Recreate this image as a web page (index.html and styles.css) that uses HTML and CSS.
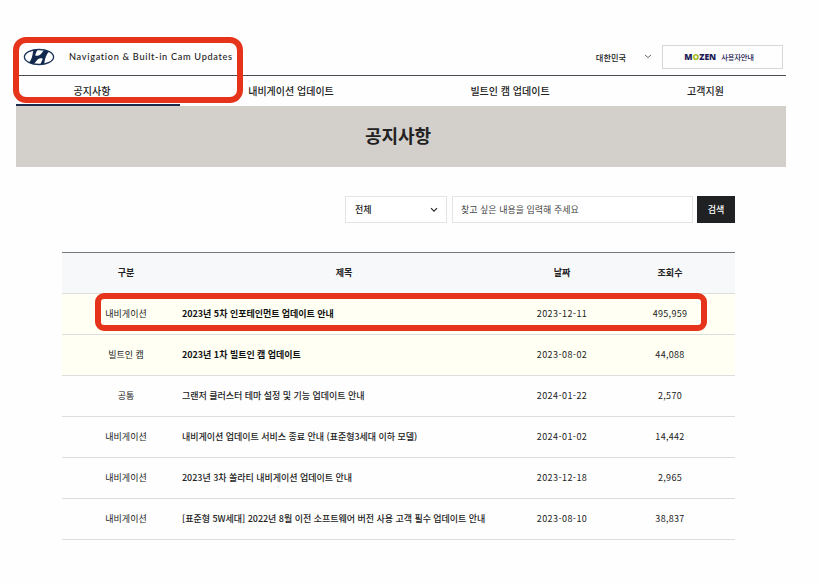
FILE: index.html
```html
<!DOCTYPE html>
<html lang="ko">
<head>
  <meta charset="UTF-8" />
  <meta name="viewport" content="width=device-width, initial-scale=1.0"/>
  <title>공지사항</title>
  <link rel="stylesheet" href="styles.css">
</head>

<body>
  <div class="page">

    <!-- HEADER -->
    <header class="header">
      <svg class="logo" viewBox="0 0 32 18" width="32" height="18">
        <ellipse cx="16" cy="9" rx="14.6" ry="7.5" fill="#fff" stroke="#1c3358" stroke-width="1.3"/>
        <path fill="#12284c" d="M10.2 2.2 L14.4 1.4 C13.6 3.8 12.2 6.2 12.3 7.2 C12.5 8.3 15.8 8 17.4 6.6 C19.2 4.8 20.2 2.6 21.6 2 L26 3.6 C23.6 6 21.8 10.5 21.2 15.9 L17.4 16.6 C18.2 14.2 19.7 11.6 19.6 10.8 C19.4 9.7 16.2 10 14.6 11.4 C12.8 13.2 11.8 15.4 10.4 16 L6 14.4 C8.6 12 9.6 7.5 10.2 2.2 Z"/>
      </svg>
      <span class="site-name">Navigation &amp; Built-in Cam Updates</span>
      <div class="country">
        <span>대한민국</span>
        <svg viewBox="0 0 8 5" width="8" height="5"><path d="M1 1 L4 3.6 L7 1" fill="none" stroke="#555" stroke-width="0.9"/></svg>
      </div>
      <a class="guide"><b>M<i>O</i>ZEN</b><span>사용자안내</span></a>
    </header>

    <!-- MENU -->
    <nav class="menu">
      <a class="active"><span>공지사항</span></a>
      <a><span>내비게이션 업데이트</span></a>
      <a><span>빌트인 캠 업데이트</span></a>
      <a><span>고객지원</span></a>
    </nav>

    <h1 class="title">공지사항</h1>

    <main class="content">
      <!-- SEARCH -->
      <div class="search">
        <div class="select">
          <span>전체</span>
          <svg viewBox="0 0 8 6" width="8" height="6"><path d="M1 1.2 L4 4.2 L7 1.2" fill="none" stroke="#222" stroke-width="1.1"/></svg>
        </div>
        <div class="keyword"><span>찾고 싶은 내용을 입력해 주세요</span></div>
        <div class="submit">검색</div>
      </div>

      <!-- NOTICE LIST -->
      <table class="list">
        <colgroup><col class="c1"><col class="c2"><col class="c3"><col class="c4"></colgroup>
        <thead>
          <tr><th>구분</th><th>제목</th><th>날짜</th><th>조회수</th></tr>
        </thead>
        <tbody>
          <tr class="pinned"><td>내비게이션</td><td>2023년 5차 인포테인먼트 업데이트 안내</td><td>2023-12-11</td><td>495,959</td></tr>
          <tr class="pinned"><td>빌트인 캠</td><td>2023년 1차 빌트인 캠 업데이트</td><td>2023-08-02</td><td>44,088</td></tr>
          <tr><td>공통</td><td>그랜저 클러스터 테마 설정 및 기능 업데이트 안내</td><td>2024-01-22</td><td>2,570</td></tr>
          <tr><td>내비게이션</td><td>내비게이션 업데이트 서비스 종료 안내 (표준형3세대 이하 모델)</td><td>2024-01-02</td><td>14,442</td></tr>
          <tr><td>내비게이션</td><td>2023년 3차 쏠라티 내비게이션 업데이트 안내</td><td>2023-12-18</td><td>2,965</td></tr>
          <tr><td>내비게이션</td><td>[표준형 5W세대] 2022년 8월 이전 소프트웨어 버전 사용 고객 필수 업데이트 안내</td><td>2023-08-10</td><td>38,837</td></tr>
        </tbody>
      </table>
    </main>
  </div>

  <!-- RED MARKERS -->
  <div class="marker marker-top"></div>
  <div class="marker marker-row"></div>
</body>
</html>
```
FILE: styles.css
```css
* {
  box-sizing: border-box;
}

body {
  margin: 0;
  height: 583px;
  background: #fefefe;
  color: #222;
  font-family: "Noto Sans CJK KR", sans-serif;
  font-size: 9px;
  overflow: hidden;
}

.page {
  width: 770px;
  margin-left: 16px;
  padding-top: 38px;
}

/* HEADER */
.header {
  display: flex;
  align-items: center;
  height: 38px;
  padding: 0 3px 0 7px;
  border-bottom: 1px solid #4a4a52;
}

.logo {
  display: block;
}

.site-name {
  margin-left: 14px;
  font-family: Lato, sans-serif;
  font-size: 9.2px;
  font-weight: 500;
  letter-spacing: 0.69px;
  white-space: nowrap;
}

.country {
  display: flex;
  align-items: center;
  gap: 18px;
  margin-left: auto;
  margin-right: 10px;
  font-size: 8.2px;
  font-weight: 500;
}

.guide {
  display: flex;
  align-items: center;
  justify-content: center;
  gap: 5px;
  width: 121px;
  height: 24px;
  padding-right: 7px;
  border: 1px solid #d5d7da;
  color: #1d1b54;
  font-size: 7.3px;
  font-weight: 500;
  letter-spacing: -0.2px;
}

.guide b {
  font-family: "Open Sans", sans-serif;
  font-size: 8.5px;
  font-weight: 800;
  letter-spacing: 0;
}

.guide i {
  color: #a9bd1c;
  font-style: normal;
}

/* MENU */
.menu {
  display: grid;
  grid-template-columns: 164px 222px 216px 1fr;
  height: 30px;
  font-size: 10px;
  font-weight: 500;
}

.menu a {
  display: flex;
  align-items: center;
  justify-content: center;
  padding-bottom: 1px;
}

.menu a:last-child {
  padding-left: 7px;
}

.menu .active {
  padding: 1px 12px 0 0;
  border-bottom: 2px solid #1a2b4c;
}

.title {
  display: flex;
  align-items: center;
  justify-content: center;
  height: 61px;
  margin: 0;
  padding: 0 6px 3px 0;
  background: #d3d0cc;
  color: #222;
  font-size: 18px;
  font-weight: 700;
}

.content {
  padding: 29px 51px 0 46px;
}

/* SEARCH */
.search {
  display: flex;
  justify-content: flex-end;
  height: 27px;
}

.select,
.keyword {
  display: flex;
  align-items: center;
  border: 1px solid #e4e4e6;
  background: #fff;
}

.select {
  justify-content: space-between;
  width: 102px;
  padding: 0 8px 0 9px;
  font-weight: 500;
}

.keyword {
  width: 241px;
  margin: 0 4px 0 5px;
  padding-left: 8px;
  color: #444;
}

.submit {
  display: flex;
  align-items: center;
  justify-content: center;
  width: 38px;
  background: #1f2123;
  color: #fff;
  font-weight: 500;
}

/* NOTICE LIST */
.list {
  width: 673px;
  margin-top: 29px;
  border-collapse: separate;
  border-spacing: 0;
  border-top: 1px solid #77797c;
  table-layout: fixed;
}

.c1 { width: 120px; }
.c2 { width: 324px; }
.c3 { width: 112px; }
.c4 { width: 117px; }

.list th,
.list td {
  height: 41px;
  padding: 0;
  border-bottom: 1px solid #dcdddd;
  line-height: 14px;
  text-align: center;
  white-space: nowrap;
}

.list th {
  background: #f7f8fa;
  font-weight: 700;
}

.list th:first-child,
.list td:first-child {
  padding-left: 8px;
}

.list th:last-child,
.list td:last-child {
  padding-right: 13px;
}

.list td:nth-child(2) {
  text-align: left;
  font-weight: 500;
  letter-spacing: -0.03px;
}

.list td:nth-child(3) {
  letter-spacing: 0.42px;
}

.list td:nth-child(4) {
  letter-spacing: 0.3px;
}

.pinned td {
  background: #fffff3;
}

.list .pinned td:nth-child(2) {
  color: #111;
  font-weight: 700;
}

/* RED MARKERS */
.marker {
  position: absolute;
  border: 6px solid #e5341b;
}

.marker-top {
  left: 13px;
  top: 37px;
  width: 230px;
  height: 66px;
  border-radius: 13px;
}

.marker-row {
  left: 95px;
  top: 293px;
  width: 612px;
  height: 38px;
  border-radius: 9px;
}
```
